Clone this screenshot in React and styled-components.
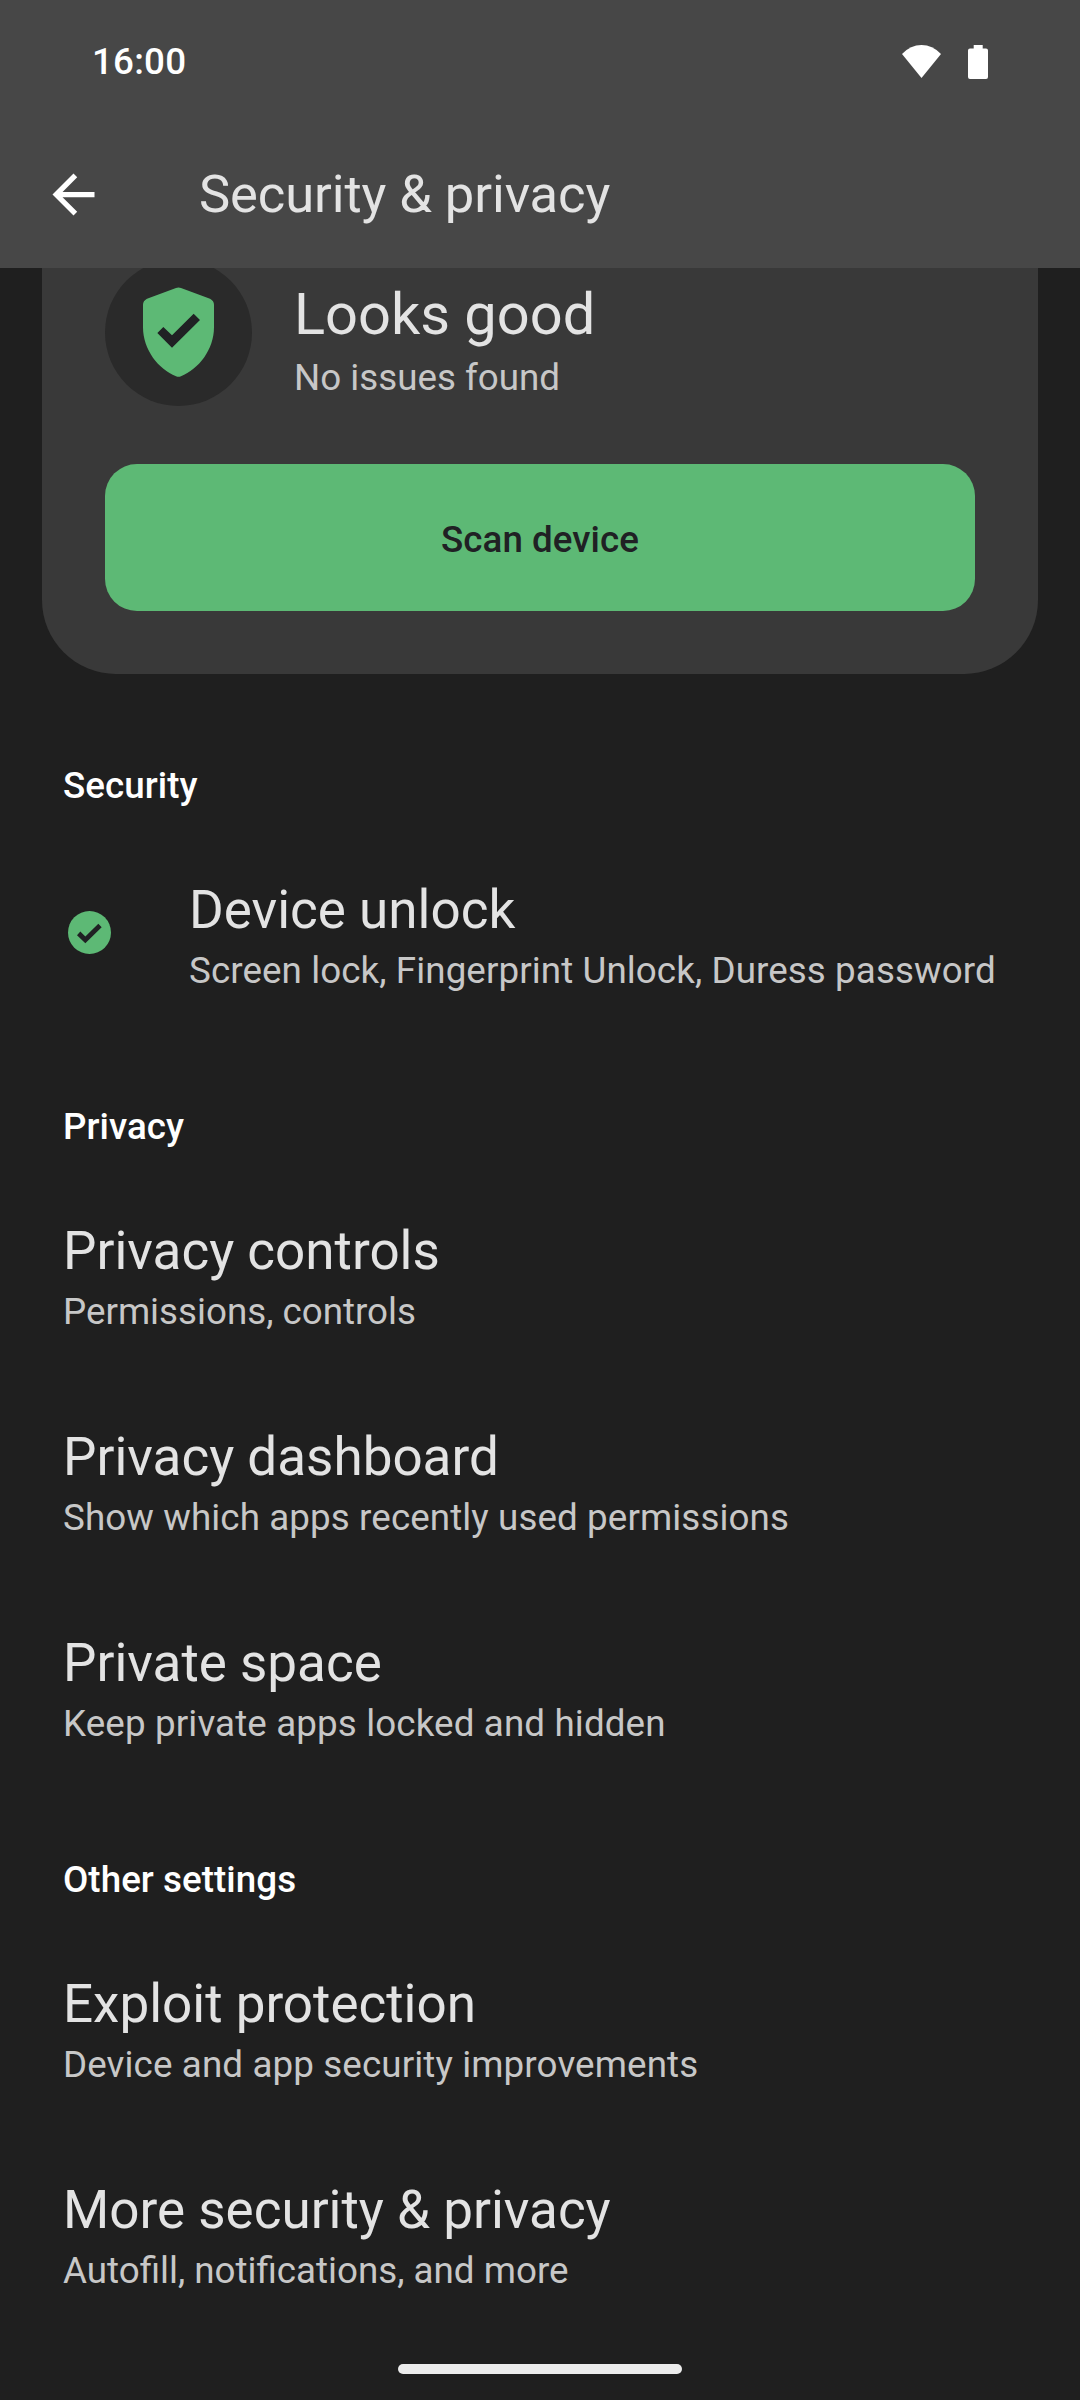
import React from "react";
import styled, { createGlobalStyle } from "styled-components";

const GlobalStyle = createGlobalStyle`
  body {
    margin: 0;
    background: #1f1f1f;
  }
`;

const Screen = styled.div`
  display: flex;
  flex-direction: column;
  width: 1080px;
  height: 2400px;
  overflow: hidden;
  background: #1f1f1f;
  color: #e3e3e3;
  font-family: Roboto, "Noto Sans", sans-serif;
  font-size: 36.75px;
`;

const TopArea = styled.header`
  flex: none;
  height: 268px;
  background: #474747;
`;

const StatusBar = styled.div`
  display: flex;
  align-items: center;
  justify-content: space-between;
  height: 124px;
  padding: 0 92px 0 92px;
  box-sizing: border-box;
`;

const Clock = styled.span`
  color: #fff;
  font-weight: 500;
  letter-spacing: 0.2px;
  line-height: 44px;
`;

const StatusIcons = styled.div`
  display: flex;
  gap: 27px;
`;

const AppBar = styled.div`
  display: flex;
  align-items: center;
  height: 141px;
  padding-left: 42px;
`;

const BackButton = styled.button`
  display: block;
  width: 63px;
  height: 63px;
  padding: 0;
  border: 0;
  background: none;
  color: #fff;
`;

const PageTitle = styled.h1`
  margin: -2px 0 0 94px;
  font-size: 52.5px;
  font-weight: 400;
  letter-spacing: -0.08px;
  line-height: 62px;
`;

const Content = styled.main`
  flex: 1;
  overflow: hidden;
`;

const StatusCard = styled.section`
  height: 478px;
  margin: -72px 42px 24px;
  padding: 63px;
  box-sizing: border-box;
  border-radius: 74px;
  background: #393939;
`;

const StatusSummary = styled.div`
  display: flex;
  gap: 42px;
  height: 205px;
`;

const StatusText = styled.div`
  padding-top: 18px;
`;

const StatusTitle = styled.div`
  font-size: 57.75px;
  line-height: 75px;
`;

const Summary = styled.div`
  color: #c7c7c7;
  letter-spacing: ${(props) => props.$tracking || "normal"};
  line-height: 52px;
  white-space: nowrap;
`;

const ScanButton = styled.button`
  display: block;
  width: 100%;
  height: 147px;
  padding: 4px 0 0;
  border: 0;
  border-radius: 32px;
  background: #5db975;
  color: #202124;
  font: 500 36.75px/52px Roboto, "Noto Sans", sans-serif;
  letter-spacing: 0.05px;
`;

const SectionTitle = styled.h2`
  height: 135px;
  margin: 0;
  padding: 62px 63px 21px;
  box-sizing: border-box;
  color: #fff;
  font-size: 36.75px;
  font-weight: 500;
  letter-spacing: 0.05px;
  line-height: 52px;
`;

const Row = styled.div`
  display: flex;
  height: 206px;
  padding: 42px 63px;
  box-sizing: border-box;
`;

const RowIcon = styled.div`
  flex: none;
  width: 126px;
  padding: 36px 0 0 5px;
  box-sizing: border-box;
`;

const RowTitle = styled.div`
  font-size: 53px;
  line-height: 70px;
  white-space: nowrap;
`;

const NavBar = styled.footer`
  display: flex;
  flex: none;
  justify-content: center;
  height: 36px;
`;

const GestureHandle = styled.div`
  width: 284px;
  height: 10px;
  border-radius: 5px;
  background: #ececec;
`;

const Icon = styled.svg`
  display: block;
`;

const WifiIcon = () => (
  <Icon width="39" height="34" viewBox="0 0 39 34" fill="#fff">
    <path d="M0 9Q8.500 0 19.500 0T39 9L19.500 33Z" />
  </Icon>
);

const BatteryIcon = () => (
  <Icon width="20" height="34" viewBox="0 0 20 34" fill="#fff">
    <path d="M5.700 0H14.700V3.500H18Q20 3.500 20 5.500V32Q20 34 18 34H2Q0 34 0 32V5.500Q0 3.500 2 3.500H5.700Z" />
  </Icon>
);

const BackIcon = () => (
  <Icon width="63" height="63" viewBox="0 0 24 24" fill="currentColor">
    <path d="M20 11H7.830l5.590-5.590L12 4l-8 8 8 8 1.410-1.410L7.830 13H20v-2z" />
  </Icon>
);

const ShieldIcon = () => (
  <Icon width="147" height="147" viewBox="225 57 441 441">
    <circle cx="445.500" cy="277.500" r="220.500" fill="#2a2a2a" />
    <path
      fill="#5db975"
      d="M438 144Q445.500 141 453 144L540 176Q552 182 552 194V262C552 330 505 388 453 409Q445.500 412 438 409C386 388 339 330 339 262V194Q339 182 351 176Z"
    />
    <path fill="#202124" d="M382 279L400 261L426 286L491 221L510 240L426 323Z" />
  </Icon>
);

const CheckIcon = () => (
  <Icon width="43" height="43" viewBox="84 152.500 129 129">
    <circle cx="148.500" cy="217" r="64.500" fill="#5db975" />
    <path fill="#202124" d="M111 225L121 214L136 229L175 191L185 201L136 249Z" />
  </Icon>
);

const sections = [
  {
    title: "Security",
    rows: [
      {
        title: "Device unlock",
        summary: "Screen lock, Fingerprint Unlock, Duress password",
        tracking: "0.09px",
        checked: true,
      },
    ],
  },
  {
    title: "Privacy",
    rows: [
      { title: "Privacy controls", summary: "Permissions, controls" },
      {
        title: "Privacy dashboard",
        summary: "Show which apps recently used permissions",
        tracking: "0.1px",
      },
      {
        title: "Private space",
        summary: "Keep private apps locked and hidden",
        tracking: "0.13px",
      },
    ],
  },
  {
    title: "Other settings",
    rows: [
      {
        title: "Exploit protection",
        summary: "Device and app security improvements",
        tracking: "0.12px",
      },
      { title: "More security & privacy", summary: "Autofill, notifications, and more" },
    ],
  },
];

export default function App() {
  return (
    <Screen>
      <GlobalStyle />
      <TopArea>
        <StatusBar>
          <Clock>16:00</Clock>
          <StatusIcons>
            <WifiIcon />
            <BatteryIcon />
          </StatusIcons>
        </StatusBar>
        <AppBar>
          <BackButton aria-label="Back">
            <BackIcon />
          </BackButton>
          <PageTitle>Security &amp; privacy</PageTitle>
        </AppBar>
      </TopArea>
      <Content>
        <StatusCard>
          <StatusSummary>
            <ShieldIcon />
            <StatusText>
              <StatusTitle>Looks good</StatusTitle>
              <Summary>No issues found</Summary>
            </StatusText>
          </StatusSummary>
          <ScanButton>Scan device</ScanButton>
        </StatusCard>
        {sections.map((section) => (
          <section key={section.title}>
            <SectionTitle>{section.title}</SectionTitle>
            {section.rows.map((row) => (
              <Row key={row.title}>
                {row.checked && (
                  <RowIcon>
                    <CheckIcon />
                  </RowIcon>
                )}
                <div>
                  <RowTitle>{row.title}</RowTitle>
                  <Summary $tracking={row.tracking}>{row.summary}</Summary>
                </div>
              </Row>
            ))}
          </section>
        ))}
      </Content>
      <NavBar>
        <GestureHandle />
      </NavBar>
    </Screen>
  );
}
